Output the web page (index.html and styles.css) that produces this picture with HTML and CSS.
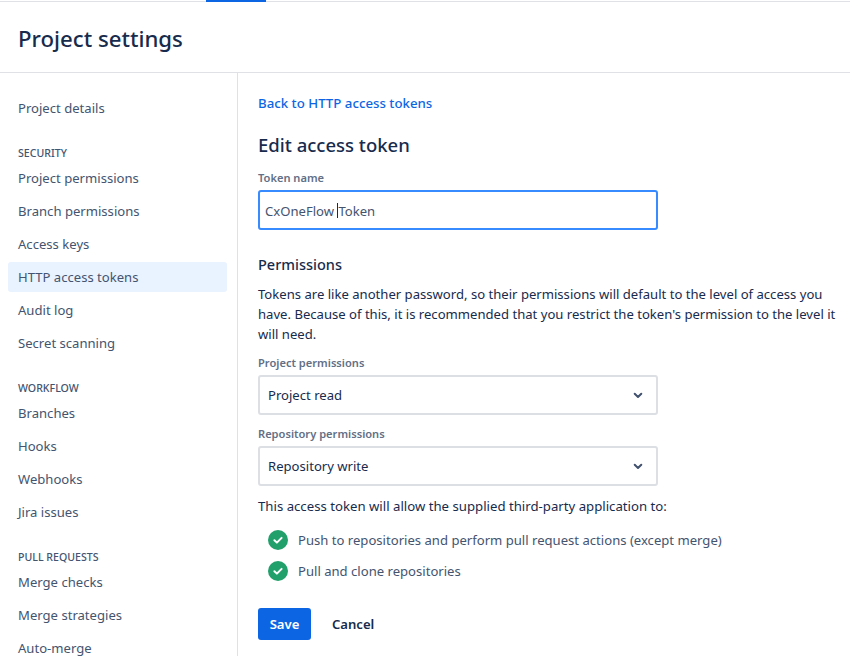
FILE: index.html
```html
<!DOCTYPE html>
<html lang="en">
<head>
<meta charset="utf-8">
<title>Project settings</title>
<link rel="stylesheet" href="styles.css">
</head>
<body>
<div class="topstrip"><span class="topstrip-tab"></span></div>
<header class="page-header"><h1>Project settings</h1></header>
<div class="layout">
  <nav class="sidebar">
    <a class="nav-item first">Project details</a>
    <div class="nav-heading">SECURITY</div>
    <a class="nav-item">Project permissions</a>
    <a class="nav-item">Branch permissions</a>
    <a class="nav-item">Access keys</a>
    <a class="nav-item active">HTTP access tokens</a>
    <a class="nav-item">Audit log</a>
    <a class="nav-item">Secret scanning</a>
    <div class="nav-heading">WORKFLOW</div>
    <a class="nav-item">Branches</a>
    <a class="nav-item">Hooks</a>
    <a class="nav-item">Webhooks</a>
    <a class="nav-item">Jira issues</a>
    <div class="nav-heading">PULL REQUESTS</div>
    <a class="nav-item">Merge checks</a>
    <a class="nav-item">Merge strategies</a>
    <a class="nav-item">Auto-merge</a>
  </nav>
  <main class="content">
    <a class="back-link">Back to HTTP access tokens</a>
    <h2>Edit access token</h2>
    <div class="field-label">Token name</div>
    <div class="input focused">CxOneFlow <span class="caret"></span>Token</div>
    <h3>Permissions</h3>
    <p class="desc">Tokens are like another password, so their permissions will default to the level of access you have. Because of this, it is recommended that you restrict the token's permission to the level it will need.</p>
    <div class="field-label select-label">Project permissions</div>
    <div class="input select"><span>Project read</span>
      <svg class="chevron" width="10" height="7" viewBox="0 0 10 7"><path d="M1.7 1.7 5 5l3.300-3.300" fill="none" stroke="#42526e" stroke-width="2" stroke-linecap="round" stroke-linejoin="round"/></svg>
    </div>
    <div class="field-label select-label second">Repository permissions</div>
    <div class="input select"><span>Repository write</span>
      <svg class="chevron" width="10" height="7" viewBox="0 0 10 7"><path d="M1.7 1.7 5 5l3.300-3.300" fill="none" stroke="#42526e" stroke-width="2" stroke-linecap="round" stroke-linejoin="round"/></svg>
    </div>
    <p class="allow">This access token will allow the supplied third-party application to:</p>
    <ul class="checks">
      <li><svg width="20" height="20" viewBox="0 0 20 20"><circle cx="10" cy="10" r="10" fill="#22a06b"/><path d="M6.400 10.200 8.900 12.600 13.600 7.900" fill="none" stroke="#fff" stroke-width="2" stroke-linecap="round" stroke-linejoin="round"/></svg>Push to repositories and perform pull request actions (except merge)</li>
      <li><svg width="20" height="20" viewBox="0 0 20 20"><circle cx="10" cy="10" r="10" fill="#22a06b"/><path d="M6.400 10.200 8.900 12.600 13.600 7.900" fill="none" stroke="#fff" stroke-width="2" stroke-linecap="round" stroke-linejoin="round"/></svg>Pull and clone repositories</li>
    </ul>
    <div class="actions">
      <button class="btn primary" type="button">Save</button>
      <button class="btn subtle" type="button">Cancel</button>
    </div>
  </main>
</div>
</body>
</html>
```

FILE: styles.css
```css
* { box-sizing: border-box; }
html, body { margin: 0; height: 656px; overflow: hidden; background: #fff; }
body { font-family: "Noto Sans", "Open Sans", sans-serif; font-size: 13.1px; line-height: 20px; color: #172b4d; }
.topstrip { height: 2px; border-bottom: 1px solid #dfe1e6; position: relative; }
.topstrip-tab { display: block; width: 60px; height: 2px; margin-left: 206px; background: #0c66e4; }
.page-header { height: 71px; border-bottom: 1px solid #dfe1e6; padding: 21px 0 0 18px; }
h1 { margin: 0; font-size: 22.2px; line-height: 32px; font-weight: 500; color: #172b4d; }
.layout { display: flex; height: 584px; overflow: hidden; }
.sidebar { width: 238px; flex: none; border-right: 1px solid #dfe1e6; padding: 20px 10px 0 8px; }
.nav-item { display: flex; align-items: center; height: 30px; margin-bottom: 3px; padding-left: 10px; border-radius: 3px; color: #44546f; }
.nav-item.first { margin-bottom: 0; }
.nav-item.active { background: #e9f2ff; }
.nav-heading { font-size: 10.6px; line-height: 14px; font-weight: 500; color: #44546f; padding-left: 10px; margin: 23px 0 3px; }
.content { flex: 1; padding: 20px 0 0 20px; min-width: 0; }
.back-link { display: block; color: #0c66e4; font-size: 13.25px; font-weight: 500; }
h2 { margin: 20px 0 0; font-size: 18.5px; line-height: 24px; font-weight: 500; }
.field-label { margin-top: 13px; font-size: 11.1px; line-height: 16px; font-weight: 600; color: #626f86; }
.input { width: 400px; height: 40px; margin-top: 4px; display: flex; align-items: center; border: 2px solid #dcdfe4; border-radius: 3px; padding: 0 8px; color: #172b4d; white-space: pre; }
.input.focused { border-color: #388bff; padding: 1px 5px 0; color: #44546f; }
.caret { display: inline-block; width: 1px; height: 15px; background: #172b4d; }
h3 { margin: 24px 0 0; font-size: 14.5px; line-height: 20px; font-weight: 500; }
.desc { width: 590px; margin: 10px 0 0; color: #172b4d; }
.select-label { margin-top: 11px; }
.select-label.second { margin-top: 11px; }
.select { justify-content: space-between; padding-right: 13px; }
.chevron { flex: none; }
.allow { margin: 10px 0 0; font-size: 13.2px; }
.checks { list-style: none; margin: 8px 0 0; padding: 0 0 0 10px; color: #44546f; }
.checks li { display: flex; align-items: center; gap: 10px; height: 31px; }
.actions { display: flex; gap: 5px; margin-top: 22px; }
.btn { font: 600 13.1px/20px "Noto Sans", "Open Sans", sans-serif; height: 32px; border: 0; border-radius: 3px; padding: 0 12px; }
.btn.primary { width: 53px; background: #0c66e4; color: #fff; padding: 0; }
.btn.subtle { background: transparent; color: #172b4d; padding: 0 16px; }
```
